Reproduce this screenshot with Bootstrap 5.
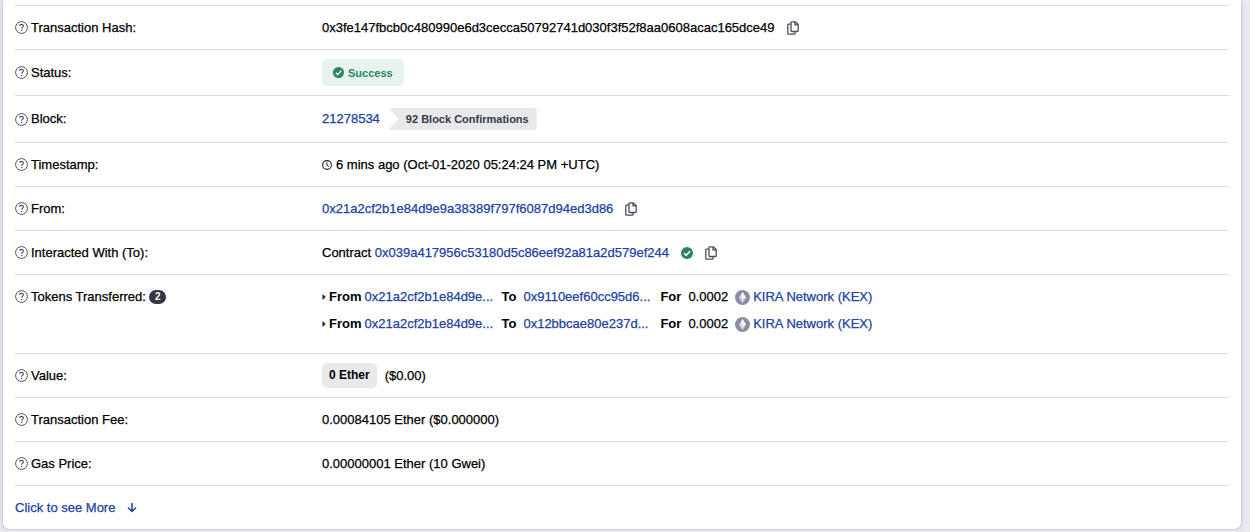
<!DOCTYPE html>
<html lang="en">
<head>
<meta charset="utf-8">
<meta name="viewport" content="width=device-width, initial-scale=1">
<title>Transaction Details</title>
<link href="https://cdn.jsdelivr.net/npm/bootstrap@5.3.0/dist/css/bootstrap.min.css" rel="stylesheet">
<style>
  body { background: #e9eaef; color: #000; font: 13px/20px "Liberation Sans", Arial, sans-serif; padding: 0 8px 0 2px; }
  .tx-card { -webkit-text-stroke: .25px currentColor; }
  b, .status-pill, .confirm-tag, .count-pill, .value-pill { -webkit-text-stroke: 0; }
  a { color: #21409f; text-decoration: none; }
  a:hover { text-decoration: underline; }
  svg { flex: none; display: block; }
  .tx-card { border: 1px solid #cbd0de; border-top: 0; border-radius: 0 0 8px 8px; padding: 5px 12px 0; box-shadow: 0 1px 4px rgba(140, 150, 175, .25); }
  .tx-row { --bs-gutter-x: 14px; }
  .tx-item { border-top: 1px solid #dadbe8; padding: 9px 0; }
  .tx-item dt, .tx-item dd { font-weight: 400; margin: 0; min-height: 25px; display: flex; align-items: center; }
  .tx-item dt { gap: 3px; align-self: center; }
  .tx-item .tx-addr { gap: 12px; }
  .tx-tall dt { align-self: flex-start; }
  .tx-block dd { min-height: 28px; }
  .icon-btn { border: 0; background: none; padding: 0; color: #4a4f5c; }
  .status-pill { background: #e9f3ee; color: #2c8560; border-radius: 5px; padding: 0 11px; height: 27px; font-size: 11px; font-weight: 700; }
  .confirm-tag { background: #e8e9eb; color: #343a46; font-size: 11px; font-weight: 700; line-height: 22px; padding: 0 8px 0 18px; border-radius: 4px; clip-path: polygon(0 0, 100% 0, 100% 100%, 0 100%, 11px 50%); }
  .count-pill { background: #323743; color: #fff; font-size: 10px; font-weight: 700; line-height: 14px; padding: 0 6px; border-radius: 7px; }
  .value-pill { background: #e8e9eb; border-radius: 5px; line-height: 25px; padding: 0 7px; font-size: 12px; font-weight: 700; }
  .tx-tokens { width: 100%; min-height: 60px; line-height: 26px; row-gap: 1px; }
  .tx-tokens li { gap: 3px; }
  .token-addr { width: 134px; }
</style>
</head>
<body>
<svg width="0" height="0" class="position-absolute" aria-hidden="true">
  <symbol id="help" viewBox="0 0 13 13"><circle cx="6.5" cy="6.5" r="5.9" fill="none" stroke="#4e515c"/><path d="M4.7 5.1c0-1.1.8-1.7 1.8-1.7s1.9.6 1.9 1.6c0 1.3-1.7 1.3-1.7 2.4v.3" fill="none" stroke="#4e515c" stroke-width="1.1"/><circle cx="6.6" cy="9.4" r=".75" fill="#4e515c"/></symbol>
  <symbol id="copy" viewBox="0 0 12 14"><path d="M4.6.8h3.8l2.8 2.8v6.2q0 .7-.7.7H4.7q-.7 0-.7-.7V1.4q0-.6.6-.6zM8 .8v3.1h3.2M4 3.2H1.5q-.7 0-.7.7v8.6q0 .7.7.7h5.8q.7 0 .7-.7v-2" fill="none" stroke="currentColor" stroke-width="1.3"/></symbol>
  <symbol id="check" viewBox="0 0 12 12"><circle cx="6" cy="6" r="6" fill="#2c8560"/><path d="M3.1 6.2 5.1 8.2 9 4.2" fill="none" stroke="#fff" stroke-width="1.6"/></symbol>
  <symbol id="clock" viewBox="0 0 10 10"><circle cx="5" cy="5" r="4.4" fill="none" stroke="#222" stroke-width="1.1"/><path d="M4.9 2.3v3l2 1.2" fill="none" stroke="#222"/></symbol>
  <symbol id="caret" viewBox="0 0 4 6"><path d="M.5 0 3.8 3 .5 6z" fill="#222"/></symbol>
  <symbol id="eth" viewBox="0 0 15 15"><circle cx="7.5" cy="7.5" r="7.5" fill="#888da2"/><path d="M7.5 2 11 7.7 7.5 13 4 7.7z" fill="#e4e6ee"/><path d="M7.5 2 11 7.7 7.5 9.7z" fill="#fff"/><path d="m4 7.9 3.5 2 3.5-2" fill="none" stroke="#a9adbd" stroke-width=".7"/></symbol>
</svg>

<main class="tx-card bg-white">
  <dl class="m-0">
    <div class="tx-item"><div class="row tx-row">
      <dt class="col-3"><svg width="13" height="13"><use href="#help"/></svg>Transaction Hash:</dt>
      <dd class="col-9 tx-addr">0x3fe147fbcb0c480990e6d3cecca50792741d030f3f52f8aa0608acac165dce49<button class="icon-btn" aria-label="Copy hash"><svg width="12" height="14"><use href="#copy"/></svg></button></dd>
    </div></div>
    <div class="tx-item"><div class="row tx-row">
      <dt class="col-3"><svg width="13" height="13"><use href="#help"/></svg>Status:</dt>
      <dd class="col-9"><span class="status-pill d-flex align-items-center gap-1"><svg width="11" height="11"><use href="#check"/></svg>Success</span></dd>
    </div></div>
    <div class="tx-item tx-block"><div class="row tx-row">
      <dt class="col-3"><svg width="13" height="13"><use href="#help"/></svg>Block:</dt>
      <dd class="col-9 gap-2"><a href="#">21278534</a><span class="confirm-tag">92 Block Confirmations</span></dd>
    </div></div>
    <div class="tx-item"><div class="row tx-row">
      <dt class="col-3"><svg width="13" height="13"><use href="#help"/></svg>Timestamp:</dt>
      <dd class="col-9 gap-1"><svg width="10" height="10"><use href="#clock"/></svg>6 mins ago (Oct-01-2020 05:24:24 PM +UTC)</dd>
    </div></div>
    <div class="tx-item"><div class="row tx-row">
      <dt class="col-3"><svg width="13" height="13"><use href="#help"/></svg>From:</dt>
      <dd class="col-9 tx-addr"><a href="#">0x21a2cf2b1e84d9e9a38389f797f6087d94ed3d86</a><button class="icon-btn" aria-label="Copy address"><svg width="12" height="14"><use href="#copy"/></svg></button></dd>
    </div></div>
    <div class="tx-item"><div class="row tx-row">
      <dt class="col-3"><svg width="13" height="13"><use href="#help"/></svg>Interacted With (To):</dt>
      <dd class="col-9 tx-addr"><span>Contract <a href="#">0x039a417956c53180d5c86eef92a81a2d579ef244</a></span><svg width="12" height="12"><use href="#check"/></svg><button class="icon-btn" aria-label="Copy contract address"><svg width="12" height="14"><use href="#copy"/></svg></button></dd>
    </div></div>
    <div class="tx-item tx-tall"><div class="row tx-row">
      <dt class="col-3"><svg width="13" height="13"><use href="#help"/></svg>Tokens Transferred:<span class="count-pill">2</span></dt>
      <dd class="col-9"><ul class="tx-tokens list-unstyled m-0 d-flex flex-column">
        <li class="d-flex align-items-center"><svg width="4" height="6"><use href="#caret"/></svg><b>From</b><a href="#" class="token-addr">0x21a2cf2b1e84d9e...</a><b class="me-1">To</b><a href="#" class="token-addr">0x9110eef60cc95d6...</a><b class="me-1">For</b><span class="me-1">0.0002</span><svg width="15" height="15"><use href="#eth"/></svg><a href="#">KIRA Network (KEX)</a></li>
        <li class="d-flex align-items-center"><svg width="4" height="6"><use href="#caret"/></svg><b>From</b><a href="#" class="token-addr">0x21a2cf2b1e84d9e...</a><b class="me-1">To</b><a href="#" class="token-addr">0x12bbcae80e237d...</a><b class="me-1">For</b><span class="me-1">0.0002</span><svg width="15" height="15"><use href="#eth"/></svg><a href="#">KIRA Network (KEX)</a></li>
      </ul></dd>
    </div></div>
    <div class="tx-item"><div class="row tx-row">
      <dt class="col-3"><svg width="13" height="13"><use href="#help"/></svg>Value:</dt>
      <dd class="col-9 gap-2"><span class="value-pill">0 Ether</span>($0.00)</dd>
    </div></div>
    <div class="tx-item"><div class="row tx-row">
      <dt class="col-3"><svg width="13" height="13"><use href="#help"/></svg>Transaction Fee:</dt>
      <dd class="col-9">0.00084105 Ether ($0.000000)</dd>
    </div></div>
    <div class="tx-item"><div class="row tx-row">
      <dt class="col-3"><svg width="13" height="13"><use href="#help"/></svg>Gas Price:</dt>
      <dd class="col-9">0.00000001 Ether (10 Gwei)</dd>
    </div></div>
  </dl>
  <div class="tx-item"><a href="#" class="d-inline-flex align-items-center">Click to see More<svg class="ms-2" width="18" height="25" viewBox="0 0 18 25" fill="none" stroke="currentColor" stroke-width="1.5"><path d="M9 8v8.5M5 12.5l4 4 4-4"/></svg></a></div>
</main>
<script src="https://cdn.jsdelivr.net/npm/bootstrap@5.3.0/dist/js/bootstrap.bundle.min.js"></script>
</body>
</html>
